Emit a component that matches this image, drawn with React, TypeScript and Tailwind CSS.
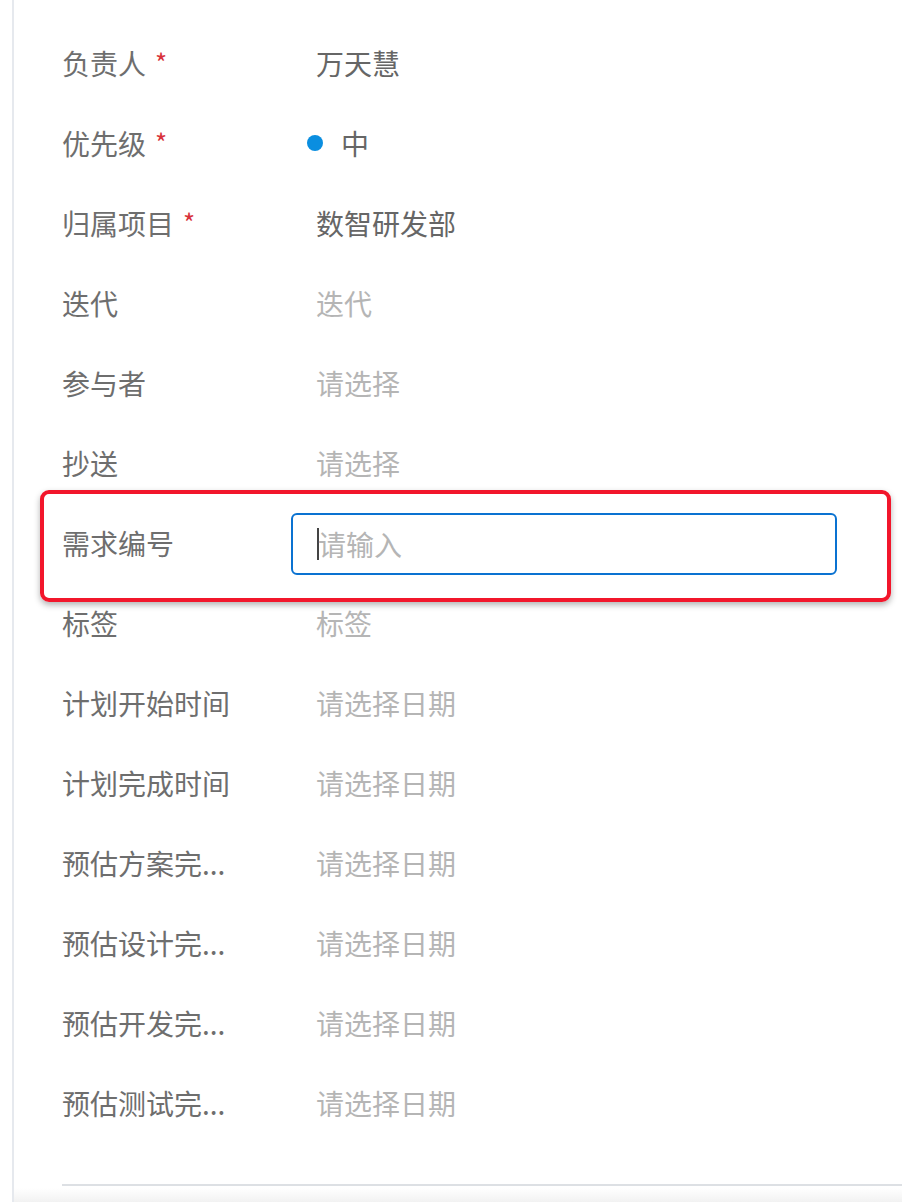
import React from "react";

type Row = {
  label: string;
  required?: boolean;
  value?: string;
  placeholder?: string;
  kind?: "text" | "priority" | "input";
};

const rows: Row[] = [
  { label: "负责人", required: true, value: "万天慧" },
  { label: "优先级", required: true, value: "中", kind: "priority" },
  { label: "归属项目", required: true, value: "数智研发部" },
  { label: "迭代", placeholder: "迭代" },
  { label: "参与者", placeholder: "请选择" },
  { label: "抄送", placeholder: "请选择" },
  { label: "需求编号", placeholder: "请输入", kind: "input" },
  { label: "标签", placeholder: "标签" },
  { label: "计划开始时间", placeholder: "请选择日期" },
  { label: "计划完成时间", placeholder: "请选择日期" },
  { label: "预估方案完...", placeholder: "请选择日期" },
  { label: "预估设计完...", placeholder: "请选择日期" },
  { label: "预估开发完...", placeholder: "请选择日期" },
  { label: "预估测试完...", placeholder: "请选择日期" },
];

export default function App() {
  return (
    <div
      className="relative w-[902px] h-[1202px] overflow-hidden bg-white"
      style={{ fontFamily: '"Noto Sans CJK SC", "Noto Sans", sans-serif' }}
    >
      <div className="flex h-full">
        <div className="w-[12px] shrink-0" />
        <div className="flex-1 border-l-2 border-[#e6e9ee] flex flex-col">
          <div className="pl-[48px] pt-[23px]">
            {rows.map((r, i) => (
              <div key={i} className="flex items-center h-[80px]">
                <div className="w-[229px] shrink-0 flex items-center text-[28px] leading-none text-[#6e6e6e]">
                  <span>{r.label}</span>
                  {r.required && (
                    <span className="ml-[9px] text-[26px] leading-none text-[#d8323a] -mt-[2px]">*</span>
                  )}
                </div>
                {r.kind === "input" ? (
                  <div className="w-[546px] h-[62px] rounded-[6px] border-2 border-[#0a72d1] flex items-center pl-[24px] mt-[1px]">
                    <span className="w-[2px] h-[32px] bg-[#444]" />
                    <span className="text-[28px] leading-none text-[#b5b5b5] -ml-[1px]">{r.placeholder}</span>
                  </div>
                ) : (
                  <div className="pl-[25px] flex items-center text-[28px] leading-none">
                    {r.kind === "priority" && (
                      <span className="w-[16px] h-[16px] rounded-full bg-[#0a8ee0] mr-[18px] -ml-[9px]" />
                    )}
                    {r.value ? (
                      <span className="text-[#666666]">{r.value}</span>
                    ) : (
                      <span className="text-[#b5b5b5]">{r.placeholder}</span>
                    )}
                  </div>
                )}
              </div>
            ))}
          </div>
          <div className="mt-[41px] ml-[48px] h-[2px] bg-[#dde0e4]" />
          <div className="flex-1 mt-[2px] bg-gradient-to-b from-white to-[#f2f2f2]" />
        </div>
      </div>
      <div className="absolute left-[40px] top-[490px] w-[851px] h-[112px] rounded-[9px] border-[4px] border-[#f2162b] shadow-[0_3px_6px_rgba(0,0,0,0.3)]" />
    </div>
  );
}
